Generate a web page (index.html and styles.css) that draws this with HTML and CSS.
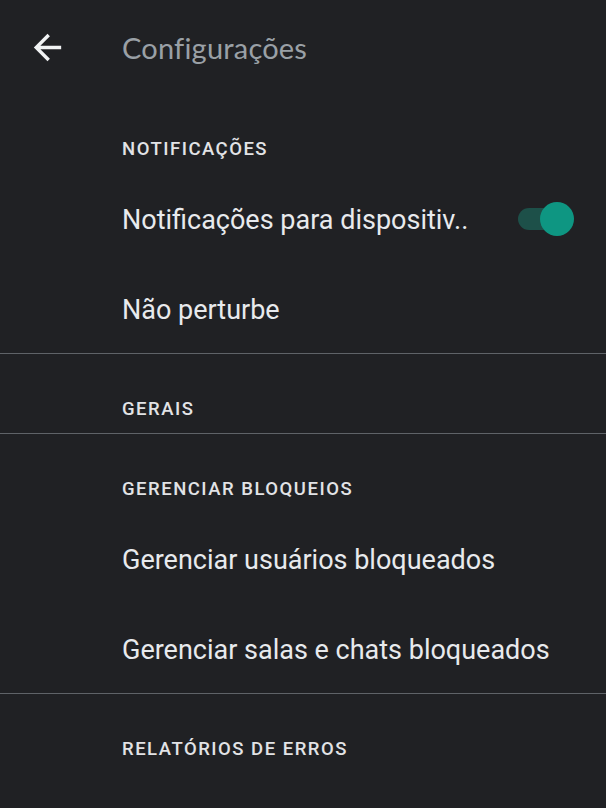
FILE: index.html
```html
<!DOCTYPE html>
<html lang="pt-BR">
  <head>
    <meta charset="UTF-8" />
    <meta name="viewport" content="width=device-width, initial-scale=1.0" />
    <title>Configurações</title>
    <link rel="stylesheet" href="styles.css">
  </head>
  <body>
    <!-- barra superior -->
    <header class="top-bar">
      <span class="back">
        <svg viewBox="0 0 24 24" width="41" height="41">
          <path d="M20 11H7.83l5.59-5.59L12 4l-8 8 8 8 1.41-1.41L7.83 13H20v-2z" fill="currentColor" />
        </svg>
      </span>
      <h1 class="title">Configurações</h1>
    </header>

    <section class="group">
      <h2 class="group-title">Notificações</h2>
      <div class="row">
        <span class="row-text">Notificações para dispositiv..</span>
        <span class="switch on"></span>
      </div>
      <div class="row">
        <span class="row-text">Não perturbe</span>
      </div>
    </section>

    <section class="group">
      <h2 class="group-title">Gerais</h2>
    </section>

    <section class="group">
      <h2 class="group-title">Gerenciar bloqueios</h2>
      <div class="row">
        <span class="row-text">Gerenciar usuários bloqueados</span>
      </div>
      <div class="row">
        <span class="row-text">Gerenciar salas e chats bloqueados</span>
      </div>
    </section>

    <section class="group">
      <h2 class="group-title">Relatórios de erros</h2>
      <div class="row">
        <span class="row-text">Enviar relatórios de erros</span>
      </div>
    </section>
  </body>
</html>
```

FILE: styles.css
```css
html,
body {
  margin: 0;
  padding: 0;
}

body {
  background-color: #202124;
  color: #e8eaed;
  font-family: Roboto, "Noto Sans", sans-serif;
  overflow: hidden;
}

h1,
h2 {
  margin: 0;
  font-weight: normal;
}

.top-bar {
  display: flex;
  align-items: center;
  height: 94px;
}

.back {
  display: flex;
  width: 41px;
  margin-left: 27px;
  margin-right: 54px;
  color: #f1f3f4;
}

.title {
  font-family: Lato, "Open Sans", sans-serif;
  font-size: 29px;
  color: #9aa0a6;
  letter-spacing: 0.2px;
}

.group {
  border-bottom: 1px solid #5f6368;
}

.group-title {
  display: flex;
  align-items: center;
  height: 79px;
  padding-left: 122px;
  padding-top: 30px;
  box-sizing: border-box;
  font-size: 18.5px;
  font-weight: 500;
  letter-spacing: 1.5px;
  text-transform: uppercase;
  color: #e2e3e6;
}

.row {
  display: flex;
  align-items: center;
  justify-content: space-between;
  height: 90px;
  padding: 4px 32px 0 122px;
  box-sizing: border-box;
}

.row-text {
  font-size: 27px;
}

/* interruptor */
.switch {
  position: relative;
  width: 42px;
  height: 22px;
  margin-right: 14px;
  margin-top: -2px;
  border-radius: 11px;
  background-color: #1d5049;
}
.switch.on::after {
  content: "";
  position: absolute;
  top: -6px;
  right: -14px;
  width: 34px;
  height: 34px;
  border-radius: 50%;
  background-color: #0e9682;
}
```
